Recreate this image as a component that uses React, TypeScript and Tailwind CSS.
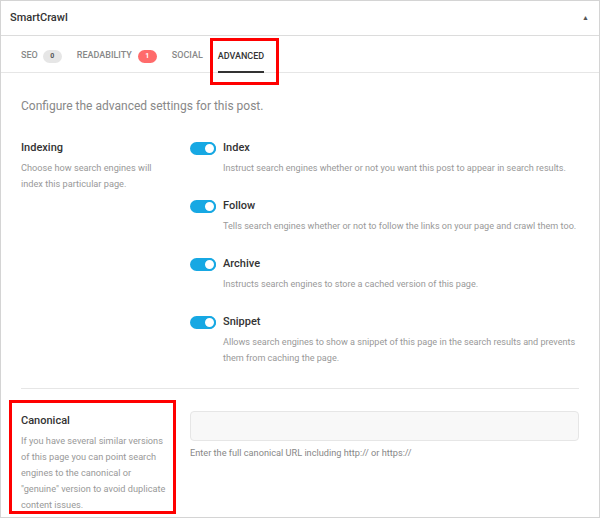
import { useState } from 'react';

const font = { fontFamily: 'Roboto, "Noto Sans", sans-serif' };

type Item = { title: string; text: string };

const items: Item[] = [
  {
    title: 'Index',
    text: 'Instruct search engines whether or not you want this post to appear in search results.',
  },
  {
    title: 'Follow',
    text: 'Tells search engines whether or not to follow the links on your page and crawl them too.',
  },
  {
    title: 'Archive',
    text: 'Instructs search engines to store a cached version of this page.',
  },
  {
    title: 'Snippet',
    text: 'Allows search engines to show a snippet of this page in the search results and prevents them from caching the page.',
  },
];

// 토글 스위치
const Toggle = ({ on, onClick }: { on: boolean; onClick: () => void }) => (
  <button
    type="button"
    onClick={onClick}
    className={`relative w-[26px] h-[13px] rounded-full shrink-0 ${on ? 'bg-[#17a8e3]' : 'bg-[#ddd]'}`}
  >
    <span
      className={`absolute top-0 w-[13px] h-[13px] rounded-full bg-white border-2 ${
        on ? 'right-0 border-[#17a8e3]' : 'left-0 border-[#ddd]'
      }`}
    />
  </button>
);

export default function App() {
  const [toggles, setToggles] = useState([true, true, true, true]);

  return (
    <div style={font} className="relative w-full h-[518px] bg-white border border-[#d4d4d4] overflow-hidden">
      {/* 헤더 */}
      <div className="flex items-center justify-between h-[35px] pl-[9px] pr-[10px] border-b border-[#dcdcdc]">
        <span className="text-[11px] font-medium text-[#333]">SmartCrawl</span>
        <span className="text-[7px] text-[#555] leading-none">▲</span>
      </div>

      {/* 탭 */}
      <div className="flex items-stretch h-[37px] pt-[4px] px-5 gap-[15px] border-b border-[#e6e6e6] text-[9px] font-medium uppercase">
        <div className="flex items-center gap-[5px] text-[#888]">
          SEO
          <span className="inline-flex items-center justify-center w-[19px] h-[13px] rounded-full bg-[#e6e6e6] text-[7px] font-bold text-[#555]">
            0
          </span>
        </div>
        <div className="flex items-center gap-[6px] text-[#888]">
          Readability
          <span className="inline-flex items-center justify-center w-[19px] h-[13px] rounded-full bg-[#ff6b6b] text-[7px] font-bold text-white">
            1
          </span>
        </div>
        <div className="flex items-center text-[#888]">Social</div>
        <div className="flex items-center text-[#333] border-b-2 border-[#333] -mb-px pt-[2px]">Advanced</div>
      </div>

      {/* 본문 */}
      <div className="px-5 pt-[25px]">
        <p className="text-[12px] leading-4 text-[#888]">Configure the advanced settings for this post.</p>

        <div className="grid grid-cols-[169px_1fr] mt-[27px]">
          <div>
            <h4 className="text-[11px] leading-[14px] font-medium text-[#333]">Indexing</h4>
            <p className="mt-[5px] text-[9.2px] leading-4 text-[#999] pr-4">
              Choose how search engines will index this particular page.
            </p>
          </div>
          <div className="flex flex-col gap-[23px]">
            {items.map((item, idx) => (
              <div key={item.title}>
                <div className="flex items-center gap-[7px]">
                  <Toggle
                    on={toggles[idx]}
                    onClick={() => setToggles(toggles.map((t, i) => (i === idx ? !t : t)))}
                  />
                  <span className="text-[11px] leading-[14px] font-medium text-[#333]">{item.title}</span>
                </div>
                <p className="mt-[5px] pl-[33px] -mr-[6px] text-[9.1px] leading-4 text-[#999]">{item.text}</p>
              </div>
            ))}
          </div>
        </div>

        <div className="h-px bg-[#e6e6e6] mt-[22px]" />

        <div className="grid grid-cols-[169px_1fr] mt-[25px]">
          <div>
            <h4 className="text-[11px] leading-[14px] font-medium text-[#333]">Canonical</h4>
            <p className="mt-[5px] text-[9.2px] leading-4 text-[#999] pr-[22px]">
              If you have several similar versions of this page you can point search engines to the canonical or
              "genuine" version to avoid duplicate content issues.
            </p>
          </div>
          <div className="-mt-[3px]">
            <input
              type="text"
              className="block w-full h-[30px] rounded bg-[#f8f8f8] border border-[#e6e6e6] px-3 text-[12px] outline-none"
            />
            <p className="mt-[4px] text-[9.2px] leading-4 text-[#888]">
              Enter the full canonical URL including http:// or https://
            </p>
          </div>
        </div>
      </div>

      {/* 강조 표시 */}
      <div className="absolute left-[209px] top-[37px] w-[69px] h-[47px] border-[3px] border-[#f00] pointer-events-none" />
      <div className="absolute left-[8px] top-[399px] w-[167px] h-[114px] border-[3px] border-[#f00] pointer-events-none" />
    </div>
  );
}
